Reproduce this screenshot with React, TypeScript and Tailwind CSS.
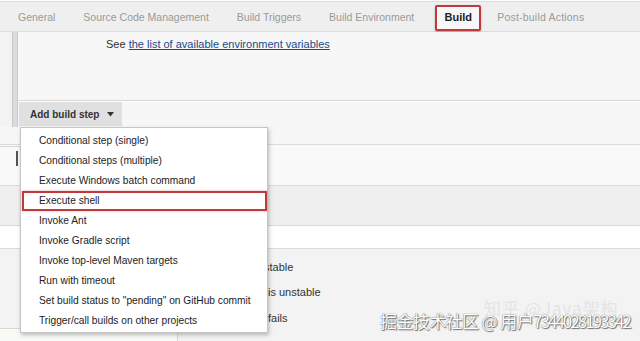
import React from "react";

const tabs = ["General", "Source Code Management", "Build Triggers", "Build Environment"];

const menuItems = [
  "Conditional step (single)",
  "Conditional steps (multiple)",
  "Execute Windows batch command",
  "Execute shell",
  "Invoke Ant",
  "Invoke Gradle script",
  "Invoke top-level Maven targets",
  "Run with timeout",
  'Set build status to "pending" on GitHub commit',
  "Trigger/call builds on other projects",
];

function TabBar() {
  return (
    <div className="h-[30px] bg-[#efefef] border-b border-[#dcdcdc] flex items-center pt-[2px] pl-[18px] text-[10.5px] text-[#9a9a9a]">
      <div className="flex items-center gap-[28px]">
        {tabs.map((t) => (
          <span key={t}>{t}</span>
        ))}
      </div>
      <div className="ml-[21px] h-[26px] w-[46px] flex items-center justify-center border-2 border-[#c0393b] rounded-[2px] bg-[#f7f7f7] shadow-[0_1px_2px_rgba(0,0,0,0.3)] font-bold text-[11px] text-[#222]">
        Build
      </div>
      <span className="ml-[16px] tracking-[0.2px]">Post-build Actions</span>
    </div>
  );
}

function AddBuildStep() {
  return (
    <div className="flex">
      <div className="ml-[12px] w-[6px] bg-[#dcdcdc] border-x border-[#c9c9c9]" />
      <div className="flex-1 flex flex-col">
        <div className="h-[68px] bg-[#f7f7f7] pt-[4px] pl-[88px] text-[11px] text-[#333]">
          See{" "}
          <span className="underline text-[#204a87]">the list of available environment variables</span>
        </div>
        <div className="h-[2px] border-t border-[#d6d6d6] bg-white" />
        <div className="h-[25px] bg-[#f7f7f7] pl-[1px]">
          <div className="h-[24px] w-[103px] bg-[#e0e0e0] flex items-center pl-[11px] text-[10px] font-bold text-[#333]">
            Add build step
            <svg className="ml-[8px]" width="7" height="5" viewBox="0 0 7 5">
              <path d="M0 0 L7 0 L3.5 4.5 Z" fill="#333" />
            </svg>
          </div>
        </div>
      </div>
    </div>
  );
}

function LowerBands() {
  return (
    <div className="flex flex-col text-[11px] text-[#333]">
      <div className="h-[17px] bg-[#f7f7f7]" />
      <div className="h-[41px] bg-[#f9f9f9] border-t border-[#dadada]">
        <div className="w-[20px] mt-[1px] border-t border-[#d6d6d6]" />
        <div className="ml-[16px] mt-[4px] w-[2px] h-[15px] bg-[#555]" />
      </div>
      <div className="h-[40px] bg-[#efefef] border-t border-[#dadada]" />
      <div className="h-[23px] bg-white border-t border-[#dadada]" />
      <div className="h-[93px] bg-[#f3f3f3] border-t border-[#dadada] flex flex-col">
        <div className="pl-[264px] mt-[11px] leading-[14px]">stable</div>
        <div className="pl-[268px] mt-[11px] leading-[14px]">is unstable</div>
        <div className="pl-[268px] mt-[12px] leading-[14px]">fails</div>
        <div className="mt-auto h-[13px] w-[178px] bg-[#f8faf5] border-t border-r border-[#d8d8d8]" />
      </div>
    </div>
  );
}

function Menu() {
  return (
    <div className="absolute left-[20px] top-[127px] w-[248px] h-[206px] bg-white border border-[#c6c6c6] shadow-[1px_2px_4px_rgba(0,0,0,0.25)] pt-[3px] text-[10.2px] text-[#222]">
      {menuItems.map((item) =>
        item === "Execute shell" ? (
          <div
            key={item}
            className="h-[20px] ml-[1px] border-2 border-[#c0393b] shadow-[0_0_2px_rgba(192,57,59,0.5)] flex items-center pl-[15px]"
          >
            {item}
          </div>
        ) : (
          <div key={item} className="h-[20px] flex items-center pl-[18px]">
            {item}
          </div>
        )
      )}
    </div>
  );
}

export default function App() {
  return (
    <div className="relative w-[640px] h-[341px] overflow-hidden bg-[#f3f3f3] font-['Liberation_Sans',Arial,sans-serif]">
      <div className="h-[2px] bg-white border-b border-[#dcdcdc]" />
      <TabBar />
      <AddBuildStep />
      <LowerBands />
      <Menu />
      <div className="absolute left-[484px] top-[299px] whitespace-nowrap leading-[17px] text-[17px] text-[#e4e4e4] font-['Noto_Sans_CJK_SC',sans-serif] tracking-[1px]">
        知乎 @Java架构
      </div>
      <div className="absolute left-[380px] top-[312px] whitespace-nowrap leading-[17px] text-[17px] text-white font-['Noto_Sans_CJK_SC',sans-serif] tracking-[-0.6px] [text-shadow:0_0_1px_#444,1px_1px_1px_#777]">
        掘金技术社区 @ 用户<span className="tracking-[-2px]">7344028193342</span>
      </div>
    </div>
  );
}
